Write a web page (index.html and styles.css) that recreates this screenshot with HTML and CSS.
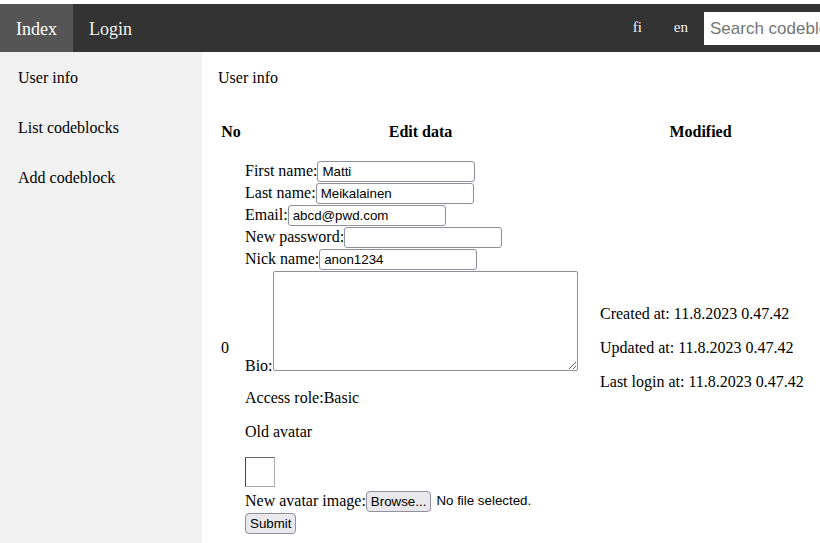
FILE: index.html
```html
<!DOCTYPE html>
<html lang="en">
<head>
<meta charset="utf-8">
<title>User info</title>
<link rel="stylesheet" href="styles.css">
</head>
<body>
<div class="page">
  <nav class="topnav">
    <a class="nav-link active" href="#">Index</a>
    <a class="nav-link" href="#">Login</a>
    <div class="nav-right">
      <a class="lang-link" href="#">fi</a>
      <a class="lang-link" href="#">en</a>
      <input class="search" type="text" placeholder="Search codeblocks">
    </div>
  </nav>
  <div class="layout">
    <aside class="sidebar">
      <a class="side-link" href="#">User info</a>
      <a class="side-link" href="#">List codeblocks</a>
      <a class="side-link" href="#">Add codeblock</a>
    </aside>
    <main class="content">
      <div class="title">User info</div>
      <table class="user-table">
        <colgroup>
          <col class="col-no">
          <col class="col-edit">
          <col class="col-mod">
        </colgroup>
        <thead>
          <tr><th>No</th><th>Edit data</th><th>Modified</th></tr>
        </thead>
        <tbody>
          <tr>
            <td>0</td>
            <td class="edit-cell">
              <form class="edit-form">
                <div class="row"><label>First name:</label><input class="field" type="text" value="Matti"></div>
                <div class="row"><label>Last name:</label><input class="field" type="text" value="Meikalainen"></div>
                <div class="row"><label>Email:</label><input class="field" type="text" value="abcd@pwd.com"></div>
                <div class="row"><label>New password:</label><input class="field" type="password"></div>
                <div class="row"><label>Nick name:</label><input class="field" type="text" value="anon1234"></div>
                <div class="bio-row"><label class="bio-label">Bio:</label><textarea class="bio"></textarea></div>
                <p class="para">Access role:Basic</p>
                <p class="para">Old avatar</p>
                <div class="avatar"></div>
                <div class="row"><label>New avatar image:</label><button type="button" class="btn">Browse...</button><span class="file-note">No file selected.</span></div>
                <div class="row"><button type="button" class="btn">Submit</button></div>
              </form>
            </td>
            <td class="mod-cell">
              <p class="para">Created at: 11.8.2023 0.47.42</p>
              <p class="para">Updated at: 11.8.2023 0.47.42</p>
              <p class="para">Last login at: 11.8.2023 0.47.42</p>
            </td>
          </tr>
        </tbody>
      </table>
    </main>
  </div>
</div>
</body>
</html>
```
FILE: styles.css
```css
html, body {
  margin: 0;
  padding: 0;
  overflow: hidden;
  background: #fff;
}

body {
  font-family: "Liberation Serif", "Times New Roman", serif;
  font-size: 16px;
  line-height: 18px;
  color: #000;
}

.page {
  padding-top: 4px;
}

.topnav {
  display: flex;
  align-items: flex-start;
  height: 48px;
  background: #333;
  overflow: hidden;
}

.nav-link {
  display: block;
  padding: 15px 16px 13px;
  font-size: 18px;
  line-height: 20px;
  color: #f2f2f2;
  text-decoration: none;
}

.nav-link.active {
  background: #555;
  color: #fff;
}

.nav-right {
  display: flex;
  align-items: flex-start;
  margin-left: auto;
  flex-shrink: 0;
}

.lang-link {
  display: block;
  padding: 13px 16px 15px;
  font-size: 15px;
  line-height: 20px;
  color: #f2f2f2;
  text-decoration: none;
}

.search {
  box-sizing: border-box;
  width: 200px;
  height: 33px;
  margin: 8px -84px 0 0;
  padding: 6px;
  border: none;
  outline: none;
  font-family: "Liberation Sans", Arial, sans-serif;
  font-size: 17px;
  background: #fff;
  flex-shrink: 0;
}

.search::placeholder {
  color: #757575;
}

.layout {
  display: flex;
  align-items: stretch;
  min-height: 539px;
}

.sidebar {
  width: 202px;
  flex-shrink: 0;
  background: #f1f1f1;
}

.side-link {
  display: block;
  padding: 17px 18px 15px;
  line-height: 18px;
  color: #000;
  text-decoration: none;
}

.content {
  flex: 1;
  min-width: 0;
  padding: 17px 16px 16px;
}

.title {
  line-height: 18px;
}

.user-table {
  width: 100%;
  margin-top: 32px;
  table-layout: fixed;
  border-spacing: 2px;
}

.col-no {
  width: 22px;
}

.col-edit {
  width: 353px;
}

.user-table th,
.user-table td {
  padding: 1px;
  line-height: 18px;
  vertical-align: middle;
}

.user-table th {
  padding: 2px 1px 0;
  font-weight: bold;
  text-align: center;
}

.edit-cell {
  text-align: left;
}

.edit-form {
  padding: 16px 0 18px;
}

.row {
  display: flex;
  align-items: center;
  height: 22px;
  white-space: nowrap;
}

.field {
  box-sizing: border-box;
  width: 158px;
  height: 21px;
  margin: 0;
  padding: 0 4px;
  border: 1px solid #8f8f9d;
  border-radius: 3px;
  font-family: "Liberation Sans", Arial, sans-serif;
  font-size: 13.33px;
  color: #000;
  background: #fff;
}

.bio-row {
  display: flex;
  align-items: flex-end;
  padding-bottom: 2px;
}

.bio-label {
  margin-bottom: -4px;
}

.bio {
  box-sizing: border-box;
  width: 305px;
  height: 100px;
  margin: 1px 0 0;
  border: 1px solid #8f8f9d;
  border-radius: 2px;
  font-family: "Liberation Mono", monospace;
  font-size: 13.33px;
  background: #fff;
}

.para {
  margin: 16px 0;
  line-height: 18px;
  white-space: nowrap;
}

.avatar {
  box-sizing: border-box;
  width: 30px;
  height: 30px;
  margin: 16px 0 3px;
  border-style: solid;
  border-width: 1px;
  border-color: #666 #aaa #aaa #444;
}

.btn {
  box-sizing: border-box;
  height: 21px;
  margin: 0;
  padding: 0 4px;
  border: 1px solid #8f8f9d;
  border-radius: 4px;
  background: #e9e9ed;
  font-family: "Liberation Sans", Arial, sans-serif;
  font-size: 13.33px;
  color: #000;
}

.file-note {
  margin-left: 5px;
  font-family: "Liberation Sans", Arial, sans-serif;
  font-size: 13.33px;
}

.mod-cell {
  text-align: left;
}
```
